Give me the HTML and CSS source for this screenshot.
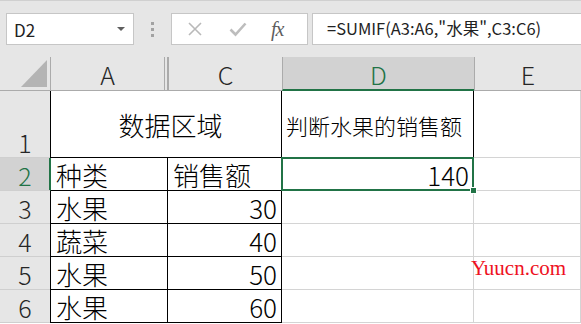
FILE: index.html
```html
<!DOCTYPE html>
<html lang="zh-CN">
<head>
    <meta charset="UTF-8">
    <meta name="viewport" content="width=device-width, initial-scale=1.0">
    <title>SUMIF</title>
    <link rel="stylesheet" href="styles.css">
</head>
<body>
    <div class="toolbar">
        <div class="namebox">
            <span>D2</span>
            <span class="caret"></span>
        </div>
        <div class="grip"><i></i><i></i><i></i></div>
        <div class="fxtools">
            <svg class="tool" width="16" height="16" viewBox="0 0 16 16">
                <path d="M2 2 L14 14 M14 2 L2 14" stroke="#b9b9b9" stroke-width="1.6" fill="none"/>
            </svg>
            <svg class="tool" width="18" height="16" viewBox="0 0 18 16">
                <path d="M1.5 8.5 L6.5 13.5 L16.5 2.5" stroke="#bdbdbd" stroke-width="2.6" fill="none"/>
            </svg>
            <span class="fx">fx</span>
        </div>
        <div class="formula">=SUMIF(A3:A6,"水果",C3:C6)</div>
    </div>

    <div class="sheet">
        <div class="hd corner">
            <svg width="26" height="27" viewBox="0 0 26 27"><polygon points="26,0 26,27 0,27" fill="#b4b4b4"/></svg>
        </div>
        <div class="hd col">A</div>
        <div class="hd col hidden"></div>
        <div class="hd col">C</div>
        <div class="hd col active">D</div>
        <div class="hd col">E</div>

        <div class="hd row bottom">1</div>
        <div class="cell data merged">数据区域</div>
        <div class="cell data small">判断水果的销售额</div>
        <div class="cell"></div>

        <div class="hd row active">2</div>
        <div class="cell data span2 sel-row">种类</div>
        <div class="cell data">销售额</div>
        <div class="cell data num sel">140</div>
        <div class="cell"></div>

        <div class="hd row">3</div>
        <div class="cell data span2">水果</div>
        <div class="cell data num">30</div>
        <div class="cell"></div>
        <div class="cell"></div>

        <div class="hd row">4</div>
        <div class="cell data span2">蔬菜</div>
        <div class="cell data num">40</div>
        <div class="cell"></div>
        <div class="cell"></div>

        <div class="hd row">5</div>
        <div class="cell data span2">水果</div>
        <div class="cell data num">50</div>
        <div class="cell"></div>
        <div class="cell"></div>

        <div class="hd row">6</div>
        <div class="cell data span2">水果</div>
        <div class="cell data num">60</div>
        <div class="cell"></div>
        <div class="cell"></div>
    </div>

    <div class="watermark">Yuucn.com</div>
</body>
</html>
```

FILE: styles.css
```css
body {
    margin: 0;
    padding: 0;
    width: 581px;
    height: 324px;
    overflow: hidden;
    background: #ffffff;
    font-family: "Noto Sans CJK SC", "Noto Sans", sans-serif;
    color: #000;
    position: relative;
}
.toolbar {
    height: 57px;
    box-sizing: border-box;
    background: #e6e6e6;
    border-top: 1px solid #d0d0d0;
    display: flex;
    align-items: flex-start;
    padding: 12px 0 0 6px;
}
.namebox {
    width: 128px;
    height: 32px;
    box-sizing: border-box;
    background: #fff;
    border: 1px solid #c6c6c6;
    display: flex;
    align-items: center;
    justify-content: space-between;
    padding: 0 8px 0 7px;
    font-size: 17px;
    color: #222;
}
.caret {
    width: 0;
    height: 0;
    border-left: 4px solid transparent;
    border-right: 4px solid transparent;
    border-top: 4px solid #5f5f5f;
}
.grip {
    width: 37px;
    height: 32px;
    display: flex;
    flex-direction: column;
    align-items: center;
    justify-content: center;
    gap: 3px;
}
.grip i {
    width: 3px;
    height: 3px;
    background: #a2a2a2;
}
.fxtools {
    width: 137px;
    height: 32px;
    box-sizing: border-box;
    background: #fff;
    border: 1px solid #c6c6c6;
    display: flex;
    align-items: center;
    padding-left: 15px;
    gap: 26px;
}
.fx {
    font-family: "Liberation Serif", serif;
    font-style: italic;
    font-size: 20px;
    color: #5e5e5e;
    letter-spacing: -1px;
    margin-left: -2px;
}
.formula {
    margin-left: 4px;
    flex: 1;
    height: 32px;
    box-sizing: border-box;
    background: #fff;
    border: 1px solid #c6c6c6;
    border-right: none;
    padding-left: 14px;
    font-size: 16.5px;
    line-height: 29px;
    color: #222;
    white-space: nowrap;
}
.sheet {
    display: grid;
    grid-template-columns: 50px 114px 4px 114px 192px 1fr;
    grid-template-rows: 34px 67px repeat(5, 33px);
    font-size: 26px;
    font-weight: 300;
    line-height: 30px;
}
.hd {
    background: #e6e6e6;
    box-sizing: border-box;
    display: flex;
    align-items: center;
    justify-content: center;
    color: #262626;
    font-size: 25px;
}
.corner {
    border-bottom: 1px solid #ababab;
    align-items: flex-end;
    justify-content: flex-end;
    padding: 0 3px 3px 0;
}
.col {
    border-left: 1px solid #ababab;
    border-bottom: 1px solid #ababab;
    padding-top: 1px;
}
.col.hidden {
    border-right: 1px solid #ababab;
}
.col.active {
    background: #d2d2d2;
    color: #217346;
    border-bottom: 2px solid #217346;
    padding-top: 2px;
}
.row {
    border-bottom: 1px solid #cfcfcf;
    padding-top: 2px;
}
.row.bottom {
    align-items: flex-end;
    padding: 0;
}
.row.active {
    background: #d2d2d2;
    color: #217346;
    box-shadow: inset -1px 0 0 #217346;
}
.cell {
    box-sizing: border-box;
    border-right: 1px solid #d4d4d4;
    border-bottom: 1px solid #d4d4d4;
    display: flex;
    align-items: center;
    padding: 2px 5px 0 5px;
    white-space: nowrap;
}
.cell.data {
    border-right-color: #000;
    border-bottom-color: #000;
}
.span2 {
    grid-column: span 2;
    border-left: 1px solid #000;
}
.sel-row {
    border-left-color: #217346;
}
.merged {
    grid-column: span 3;
    border-left: 1px solid #000;
    justify-content: center;
    padding-left: 14px;
}
.small {
    font-size: 22px;
    padding-left: 4px;
}
.num {
    justify-content: flex-end;
    padding-right: 4px;
}
.sel {
    position: relative;
}
.sel::after {
    content: "";
    position: absolute;
    left: -1px;
    top: -1px;
    right: -1px;
    bottom: -1px;
    border: 2px solid #217346;
}
.sel::before {
    content: "";
    position: absolute;
    right: -4px;
    bottom: -4px;
    width: 5px;
    height: 5px;
    background: #217346;
    border: 1px solid #fff;
    z-index: 1;
}
.watermark {
    position: absolute;
    left: 471px;
    top: 258px;
    font-family: "Liberation Serif", serif;
    font-size: 21px;
    line-height: 20px;
    color: #ee1122;
}
```
